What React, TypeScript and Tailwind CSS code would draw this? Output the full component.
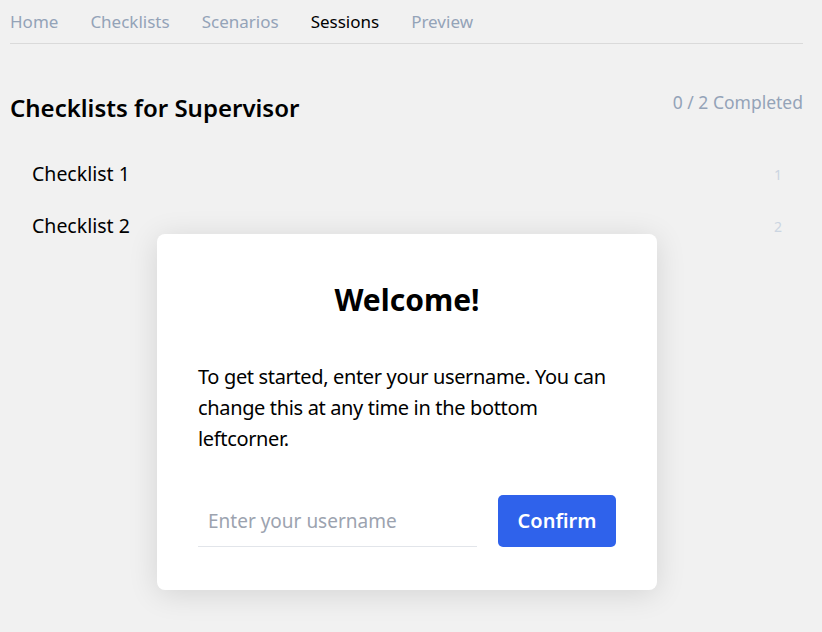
import React, { useState } from 'react';

const navItems = ["Home", "Checklists", "Scenarios", "Sessions", "Preview"];

const checklists = [
  { id: 1, name: "Checklist 1" },
  { id: 2, name: "Checklist 2" },
];

export default function App() {
  const [username, setUsername] = useState("");

  return (
    <div className="relative min-h-[632px] bg-[#f1f1f1] px-[10px] text-black" style={{ fontFamily: '"Segoe UI", "Noto Sans", sans-serif' }}>
      <nav className="flex gap-8 border-b border-[#dadada] pt-[10px] pb-[9px] text-[17px] leading-[24px] w-[793px]">
        {navItems.map(item => (
          <span key={item} className={item === "Sessions" ? "text-black" : "text-[#94a3b8]"}>
            {item}
          </span>
        ))}
      </nav>

      <div className="w-[793px]">
        <div className="mt-[48px] flex items-start justify-between">
          <h1 className="text-[24px] font-semibold leading-[32px]">Checklists for Supervisor</h1>
          <span className="-mt-[2px] text-[17.5px] leading-[24px] text-[#94a3b8]">0 / 2 Completed</span>
        </div>

        <ul className="mt-[24px] pl-[22px] pr-[21px]">
          {checklists.map(c => (
            <li key={c.id} className="flex h-[52px] items-center justify-between">
              <span className="text-[19.5px]">{c.name}</span>
              <span className="text-[14px] text-[#cbd5e1]">{c.id}</span>
            </li>
          ))}
        </ul>
      </div>

      <div className="absolute left-[157px] top-[234px] w-[500px] rounded-[8px] bg-white px-[41px] pt-[46px] pb-[43px] shadow-[0_4px_30px_rgba(0,0,0,0.12)]">
        <h2 className="text-center text-[30px] font-bold leading-[40px]">Welcome!</h2>
        <p className="mt-[41px] text-[20px] leading-[31px] tracking-[-0.35px]">
          To get started, enter your username. You can change this at any time in the bottom leftcorner.
        </p>
        <div className="mt-[41px] flex items-center justify-between">
          <input
            autoFocus
            value={username}
            onChange={e => setUsername(e.target.value)}
            placeholder="Enter your username"
            className="h-[52px] w-[279px] border-b border-[#e2e5ea] pl-[10px] text-[19px] caret-black outline-none placeholder:text-[#9ca3af]"
          />
          <button className="h-[52px] w-[118px] rounded-[5px] bg-[#2f62eb] text-[20px] font-semibold text-white">
            Confirm
          </button>
        </div>
      </div>
    </div>
  );
}
